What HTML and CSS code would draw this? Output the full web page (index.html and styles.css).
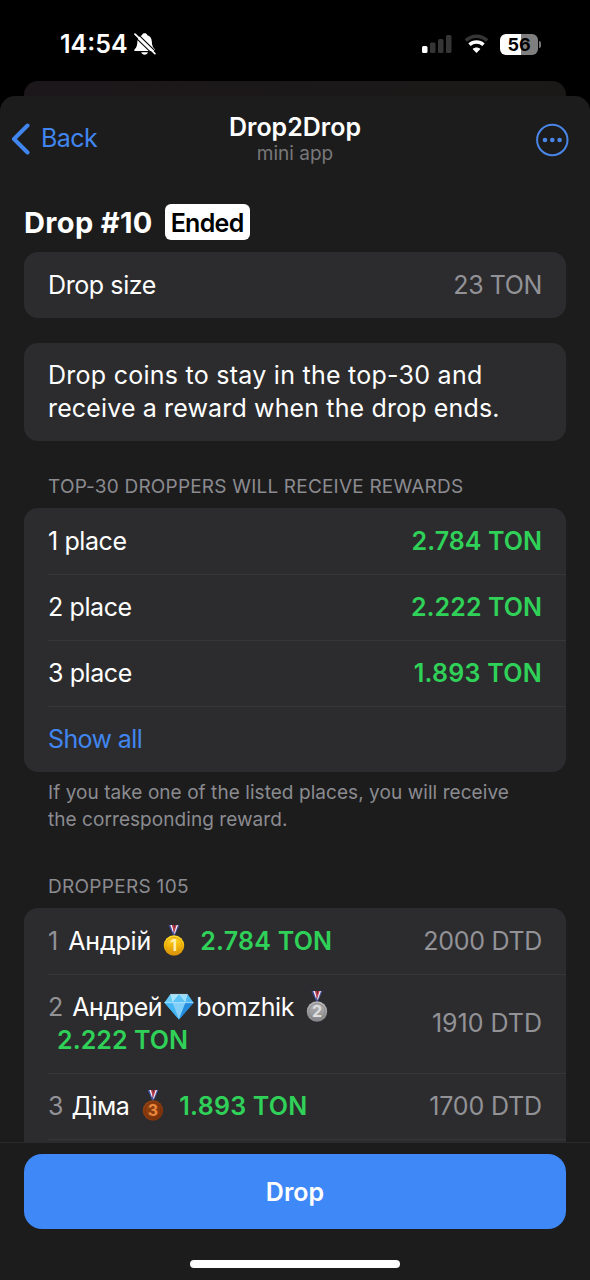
FILE: index.html
```html
<!DOCTYPE html>
<html lang="en">
<head>
<meta charset="utf-8">
<title>Drop2Drop</title>
<link rel="stylesheet" href="styles.css">
</head>
<body>
<svg class="defs" width="0" height="0" aria-hidden="true">
  <defs>
    <linearGradient id="gold" x1="0" y1="0" x2="0" y2="1"><stop offset="0" stop-color="#ffdb2d"/><stop offset=".5" stop-color="#f3b80b"/><stop offset="1" stop-color="#d48b08"/></linearGradient>
    <linearGradient id="silver" x1="0" y1="0" x2="0" y2="1"><stop offset="0" stop-color="#b8b8ba"/><stop offset="1" stop-color="#858587"/></linearGradient>
    <linearGradient id="bronze" x1="0" y1="0" x2="1" y2="1"><stop offset="0" stop-color="#9a4510"/><stop offset="1" stop-color="#77300b"/></linearGradient>
    <symbol id="ribbon" viewBox="0 0 22 32">
      <path d="M5.500 0h3l4 8-2 3z" fill="#3d4c9c"/><path d="M7.300 0h2l2.600 6-1.400 3z" fill="#f4eef5"/><path d="M9 0h2.100l.7 5-1 2z" fill="#b63546"/>
      <path d="M16.500 0h-3l-4 8 2 3z" fill="#48529a"/><path d="M15 0h-2l-2.400 7 1.200 2z" fill="#f4eef5"/><path d="M13.600 0h-1.400l-1.500 6 .5 2z" fill="#bd3c50"/>
    </symbol>
  </defs>
</svg>
<div class="phone">
  <header class="status">
    <div class="status-left">
      <span class="clock">14:54</span>
      <svg class="bell" width="22" height="22" viewBox="0 0 22 22">
        <path fill="#fff" d="M1.2 18c-1 0-1.200-1-.5-1.800 2.100-2 2.500-3.800 2.700-7.900C3.600 4.800 5.200 2.900 8 2.200 8.400.800 9.300.200 10.600.200s2.300.600 2.700 2c2.700.700 4.200 2.600 4.500 6.100.200 4.100.9 5.900 3 7.900.7.800.4 1.800-.6 1.800zM7.200 19.200h6.800c-.5 1.500-1.800 2.500-3.400 2.500s-2.900-1-3.400-2.500z"/>
        <path d="M-.5 2.500 19.300 21.800M2.300-.4 22.100 18.900" stroke="#000" stroke-width="1.100"/>
        <path d="M1 1.200 20.900 20.600" stroke="#fff" stroke-width="1.700" stroke-linecap="round"/>
      </svg>
    </div>
    <div class="status-right">
      <svg width="30" height="20" viewBox="0 0 30 20"><rect y="12" width="5.500" height="7" rx="1.500" fill="#fff"/><g fill="#353535"><rect x="8" y="8.500" width="5.500" height="10.500" rx="1.500"/><rect x="16" y="5" width="5.500" height="14" rx="1.500"/><rect x="24" y="1" width="5.500" height="18" rx="1.500"/></g></svg>
      <svg class="wifi" width="25" height="20" viewBox="0 0 25 20" fill="none"><path d="M1.800 6.500C8 .8 17 .8 23.200 6.500" stroke="#353535" stroke-width="3.400"/><path d="M5.500 10.800C9.500 7 15.500 7 19.500 10.800" stroke="#fff" stroke-width="3.400"/><path d="M12.500 19 8.600 15c2.200-2 5.600-2 7.800 0z" fill="#fff"/></svg>
      <div class="battery"><span class="battery-body">56</span><span class="battery-tip"></span></div>
    </div>
  </header>
  <div class="behind"></div>
  <section class="sheet">
    <nav class="nav">
      <div class="back">
        <svg width="20" height="32" viewBox="0 0 20 32" fill="none" stroke="#4186ef" stroke-width="4" stroke-linecap="round" stroke-linejoin="round"><path d="M16.500 2.500 3 16l13.500 13.500"/></svg>
        <span class="back-text">Back</span>
      </div>
      <div class="heading"><div class="app-title">Drop2Drop</div><div class="app-sub">mini app</div></div>
      <svg class="more" width="34" height="34" viewBox="0 0 34 34"><circle cx="17.300" cy="17" r="15.200" fill="none" stroke="#4a86e8" stroke-width="2"/><g fill="#4a86e8"><circle cx="10" cy="17" r="2.300"/><circle cx="17.300" cy="17" r="2.300"/><circle cx="24.600" cy="17" r="2.300"/></g></svg>
    </nav>
    <main class="content">
      <div class="title-row"><h1 class="title">Drop #10</h1><span class="badge">Ended</span></div>
      <div class="card row"><span class="t-size">Drop size</span><span class="muted t-value">23 TON</span></div>
      <div class="card info"><div class="info-a">Drop coins to stay in the top-30 and</div><div class="info-b">receive a reward when the drop ends.</div></div>
      <div class="label label-top">TOP-30 DROPPERS WILL RECEIVE REWARDS</div>
      <div class="card">
        <div class="row"><span class="place">1 place</span><span class="green">2.784 TON</span></div>
        <div class="row line"><span class="place">2 place</span><span class="green">2.222 TON</span></div>
        <div class="row line"><span class="place">3 place</span><span class="green wide">1.893 TON</span></div>
        <div class="row line"><span class="link">Show all</span></div>
      </div>
      <div class="note"><div class="note-a">If you take one of the listed places, you will receive</div><div class="note-b">the corresponding reward.</div></div>
      <div class="label label-drop">DROPPERS 105</div>
      <div class="card list">
        <div class="row"><div class="who"><span class="muted num num1">1</span><span class="name1">Андрій</span>
          <svg class="medal" width="22" height="32" viewBox="0 0 22 32"><use href="#ribbon"/><circle cx="11" cy="20.500" r="10.200" fill="url(#gold)"/><circle cx="11" cy="20.500" r="8" fill="none" stroke="#dba00a" stroke-width=".8"/><text x="10.600" y="26.300" class="medal-num" fill="#ffefb0">1</text></svg>
          <span class="green wide">2.784 TON</span></div><span class="muted dtd">2000 DTD</span></div>
        <div class="row line tall"><div><div class="who"><span class="muted num">2</span><span class="name2">Андрей</span>
          <svg class="gem" width="30" height="28" viewBox="0 0 31 28"><path d="M6.500 1h18L30.500 9.500 15.500 27 .5 9.500z" fill="#39a9ed"/><path d="M6.500 1 .5 9.500h8.300z" fill="#66cbf7"/><path d="M6.500 1h9l-6.700 8.500z" fill="#a8e4fc"/><path d="M15.500 1 8.800 9.500h13.400z" fill="#5ac2f6"/><path d="M15.500 1h9l-2.300 8.500z" fill="#9bdefb"/><path d="m24.500 1 6 8.500h-8.300z" fill="#4eb9f2"/><path d="M.5 9.500h8.300l6.700 17.500z" fill="#43b6f3"/><path d="M8.800 9.500h13.400L15.500 27z" fill="#82cffa"/><path d="M22.200 9.500h8.300L15.500 27z" fill="#238cdf"/><path d="M.5 9.500h30M6.500 1h18" stroke="#d1f2ff" stroke-width=".7"/></svg>
          <span class="name3">bomzhik</span>
          <svg class="medal" width="22" height="32" viewBox="0 0 22 32"><use href="#ribbon"/><circle cx="11" cy="20.500" r="10.200" fill="url(#silver)"/><circle cx="11" cy="20.500" r="8" fill="none" stroke="#88888a" stroke-width=".8"/><text x="11" y="26.300" class="medal-num" fill="#dededf">2</text></svg></div>
          <div class="green wrapped">2.222 TON</div></div><span class="muted dtd2">1910 DTD</span></div>
        <div class="row line"><div class="who"><span class="muted num num3">3</span><span class="name4">Діма</span>
          <svg class="medal medal3" width="22" height="32" viewBox="0 0 22 32"><use href="#ribbon"/><circle cx="11" cy="20.500" r="10.200" fill="url(#bronze)"/><circle cx="11" cy="20.500" r="8" fill="none" stroke="#752f0b" stroke-width=".8"/><text x="11" y="26.300" class="medal-num" fill="#e9873d">3</text></svg>
          <span class="green wide">1.893 TON</span></div><span class="muted dtd3">1700 DTD</span></div>
        <div class="row line"></div>
      </div>
    </main>
    <footer class="bottom"><button class="drop">Drop</button><div class="home"></div></footer>
  </section>
</div>
</body>
</html>
```
FILE: styles.css
```css
* { box-sizing: border-box; }
body { margin: 0; background: #000; color: #fff; font-family: Inter, "Noto Sans", sans-serif; font-size: 25px; line-height: 33px; }
.defs { position: absolute; }
.phone { height: 1280px; display: flex; flex-direction: column; overflow: hidden; white-space: nowrap; }
.status { height: 81px; flex: none; display: flex; justify-content: space-between; align-items: flex-start; padding: 28px 49px 0 60px; }
.status-left { display: flex; align-items: center; gap: 6px; }
.clock { font-size: 25px; font-weight: 600; line-height: 32px; }
.status-right { display: flex; align-items: center; height: 32px; }
.wifi { margin: 0 11px 0 12px; }
.battery { display: flex; align-items: center; gap: 1px; }
.battery-body { width: 38px; height: 21px; border-radius: 6px; background: linear-gradient(90deg, #fff 56%, #7f7f7f 56%); color: #000; font-size: 18px; font-weight: 700; line-height: 21px; text-align: center; }
.battery-tip { width: 2px; height: 7px; border-radius: 0 3px 3px 0; background: #777; }
.behind { height: 15px; flex: none; margin: 0 24px; border-radius: 14px 14px 0 0; background: linear-gradient(90deg, #1b171a, #1b1918); }
.sheet { flex: 1; min-height: 0; display: flex; flex-direction: column; background: #1c1c1d; border-radius: 15px 15px 0 0; overflow: hidden; }
.nav { height: 108px; flex: none; display: grid; grid-template-columns: 1fr auto 1fr; align-items: start; padding: 15px 21px 0 21px; }
.back { display: flex; align-items: center; gap: 10px; margin: 11px 0 0 -10px; color: #4186ef; }
.back-text { letter-spacing: -.6px; }
.heading { text-align: center; }
.app-title { font-size: 25px; font-weight: 600; line-height: 32px; }
.app-sub { font-size: 19px; line-height: 22px; color: #78787a; }
.more { justify-self: end; margin-top: 12px; }
.content { flex: 1; min-height: 0; padding: 0 24px; overflow: hidden; }
.title-row { display: flex; align-items: center; gap: 12px; height: 36px; margin-bottom: 12px; }
.title { margin: 0; font-size: 29px; font-weight: 700; letter-spacing: .35px; }
.badge { background: #fff; color: #000; height: 36px; line-height: 38px; padding: 0 6px; border-radius: 6px; font-weight: 600; letter-spacing: -.7px; }
.card { background: #2c2c2e; border-radius: 14px; }
.row { display: flex; align-items: center; justify-content: space-between; height: 66px; padding: 0 24px; }
.line { background: linear-gradient(#363638, #363638) 24px 0 / 100% 1px no-repeat; }
.tall { height: 99px; }
.t-size { letter-spacing: -.4px; }
.t-value { letter-spacing: -.4px; }
.place { letter-spacing: -.4px; }
.info { margin-top: 25px; height: 98px; padding: 16px 24px; }
.info-a { letter-spacing: .26px; }
.info-b { letter-spacing: .14px; }
.label { padding-left: 24px; font-size: 19px; line-height: 27px; color: #8b8b90; letter-spacing: .2px; }
.label-top { margin: 32px 0 8px; }
.label-drop { margin: 40px 0 8px; letter-spacing: .3px; }
.muted { color: #929297; }
.green { color: #30d158; font-weight: 600; letter-spacing: .06px; }
.wide { letter-spacing: .25px; }
.link { color: #4186ef; letter-spacing: -.6px; }
.note { padding: 7px 24px 0; font-size: 19px; line-height: 27px; color: #8b8b90; letter-spacing: .06px; }
.who { display: flex; align-items: center; }
.num { margin-right: 9px; }
.num1 { margin-right: 10px; }
.num3 { margin-right: 8px; }
.name1 { letter-spacing: -.15px; }
.name2 { letter-spacing: -.4px; }
.name3 { letter-spacing: -.4px; }
.name4 { letter-spacing: -.5px; }
.dtd { letter-spacing: -.3px; }
.dtd3 { letter-spacing: -.15px; }
.medal { margin: 0 15px 0 12px; overflow: visible; }
.medal3 { margin-left: 13px; }
.medal-num { font-size: 16px; font-weight: 700; text-anchor: middle; }
.gem { margin: 0 2px; }
.wrapped { padding-left: 9px; }
.list { border-radius: 14px 14px 0 0; height: 300px; }
.bottom { height: 138px; flex: none; padding: 11px 24px 0; border-top: 1px solid #2a2a2b; background: #1c1c1d; }
.drop { display: block; width: 100%; height: 75px; border: 0; border-radius: 18px; background: #3f88f7; color: #fff; font: 600 25px Inter, sans-serif; }
.home { width: 210px; height: 8px; margin: 31px auto 0; border-radius: 4px; background: #fff; }
```
